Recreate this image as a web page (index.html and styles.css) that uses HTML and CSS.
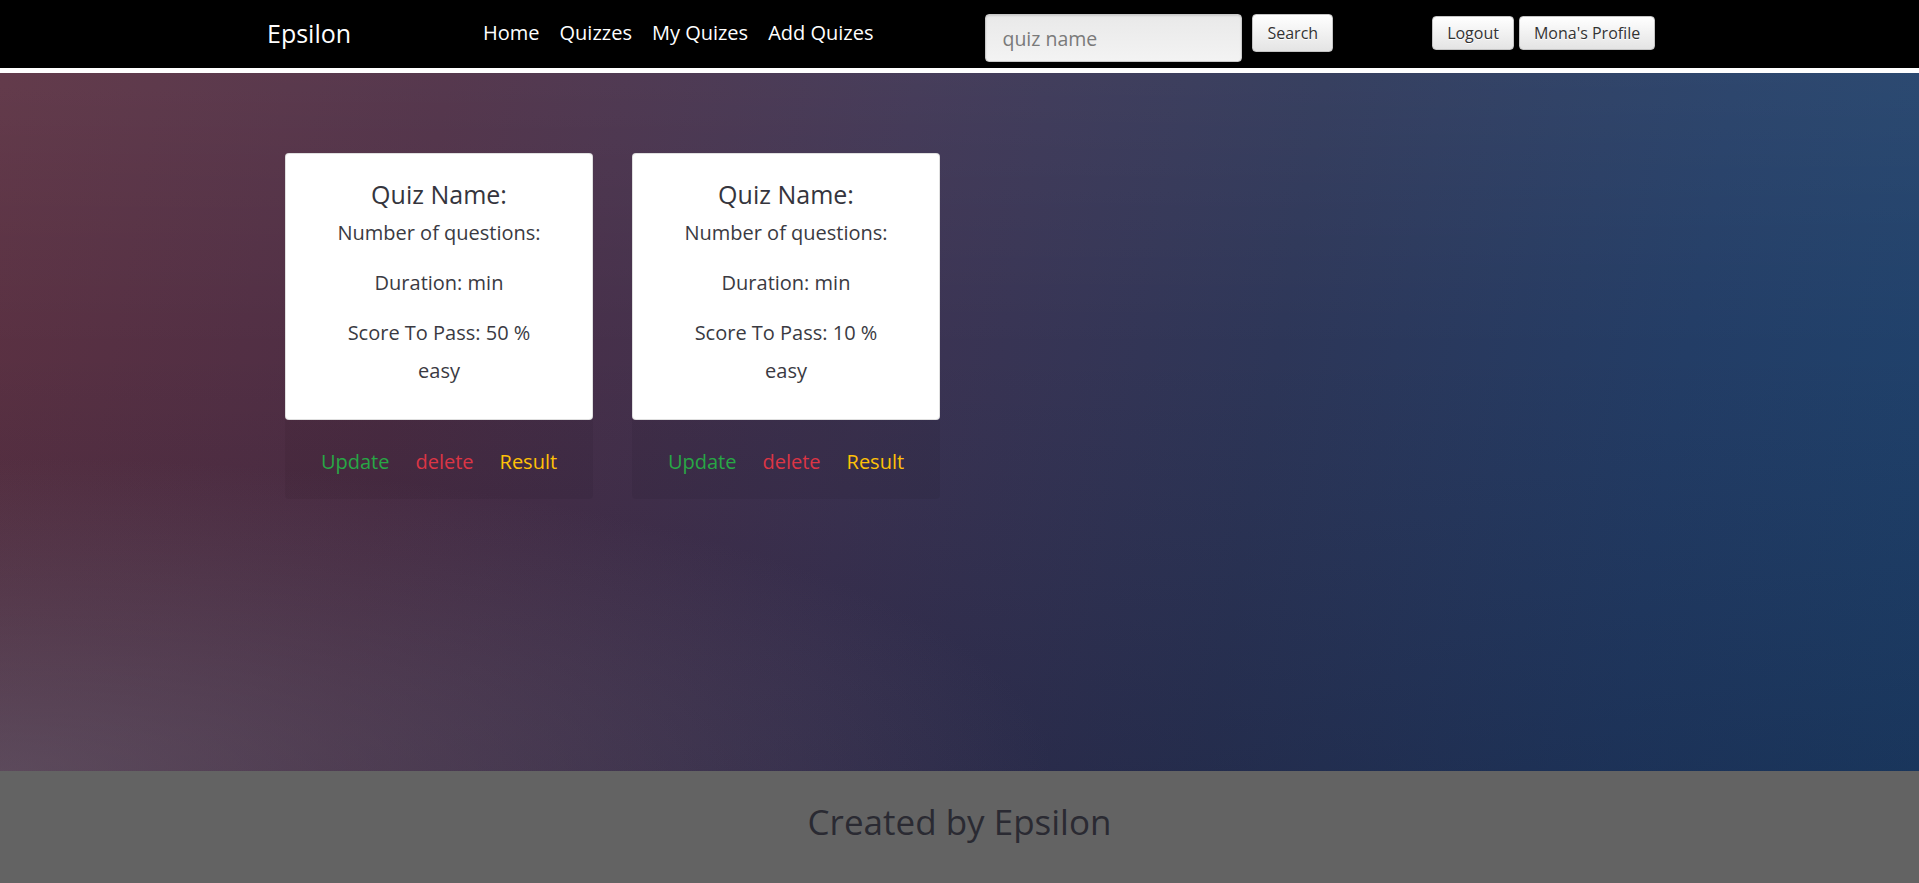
FILE: index.html
```html
<!DOCTYPE html>
<html lang="en">
<head>
<meta charset="utf-8">
<title>Epsilon Quizzes</title>
<link rel="stylesheet" href="styles.css">
</head>
<body>
<header class="navbar">
  <div class="nav-inner">
    <a class="brand" href="#">Epsilon</a>
    <ul class="nav-links">
      <li><a href="#">Home</a></li>
      <li><a href="#">Quizzes</a></li>
      <li><a href="#">My Quizes</a></li>
      <li><a href="#">Add Quizes</a></li>
    </ul>
    <form class="search">
      <input class="search-input" type="text" placeholder="quiz name">
      <button class="btn" type="button">Search</button>
    </form>
    <div class="account">
      <button class="btn btn-sm" type="button">Logout</button>
      <button class="btn btn-sm" type="button">Mona's Profile</button>
    </div>
  </div>
</header>

<main class="hero">
  <div class="cards">
    <div class="card">
      <div class="card-body">
        <h5 class="card-title">Quiz Name:</h5>
        <p class="line">Number of questions:</p>
        <p class="line">Duration: min</p>
        <p class="line tight">Score To Pass: 50 %</p>
        <div class="level">easy</div>
      </div>
      <div class="card-footer">
        <a class="act update" href="#">Update</a>
        <a class="act delete" href="#">delete</a>
        <a class="act result" href="#">Result</a>
      </div>
    </div>
    <div class="card">
      <div class="card-body">
        <h5 class="card-title">Quiz Name:</h5>
        <p class="line">Number of questions:</p>
        <p class="line">Duration: min</p>
        <p class="line tight">Score To Pass: 10 %</p>
        <div class="level">easy</div>
      </div>
      <div class="card-footer">
        <a class="act update" href="#">Update</a>
        <a class="act delete" href="#">delete</a>
        <a class="act result" href="#">Result</a>
      </div>
    </div>
  </div>
</main>

<footer class="site-footer">
  <h2 class="footer-text">Created by Epsilon</h2>
</footer>
</body>
</html>
```

FILE: styles.css
```css
* { box-sizing: border-box; }

html, body {
  margin: 0;
  padding: 0;
}

body {
  font-family: "Open Sans", "Noto Sans", "DejaVu Sans", sans-serif;
  color: #333;
  background: #636363;
}

a { text-decoration: none; }

/* ---------- navbar ---------- */
.navbar {
  background: #000;
  height: 73px;
  border-bottom: 5px solid #fff;
}

.nav-inner {
  display: flex;
  align-items: center;
  height: 68px;
  padding-left: 267px;
  padding-bottom: 3px;
}

.brand {
  color: #fff;
  font-size: 25px;
  line-height: 30px;
  width: 206px;
}

.nav-links {
  list-style: none;
  display: flex;
  margin: 0;
  padding: 0;
}

.nav-links a {
  display: block;
  color: #fff;
  font-size: 20px;
  line-height: 29px;
  padding: 0 10px;
}

.search {
  display: flex;
  align-items: flex-start;
  gap: 10px;
  align-self: flex-start;
  margin-top: 14px;
  margin-left: 102px;
}

.search-input {
  width: 257px;
  height: 48px;
  border: 1px solid #c8c8c8;
  border-radius: 4px;
  background: linear-gradient(to bottom, #e9e9e9 0%, #f3f3f3 100%);
  box-shadow: inset 0 1px 2px rgba(0, 0, 0, 0.12);
  padding: 0 16px;
  font-family: inherit;
  font-size: 19.5px;
  color: #333;
}

.search-input::placeholder { color: #7a7a7a; }

.btn {
  font-family: inherit;
  font-size: 16px;
  color: #333;
  height: 38px;
  padding: 0 14px;
  border: 1px solid #c4c4c4;
  border-radius: 4px;
  background: linear-gradient(to bottom, #ffffff 0%, #e4e4e4 100%);
  text-shadow: 0 1px 0 #fff;
  cursor: pointer;
}

.account {
  display: flex;
  gap: 5px;
  margin-left: 99px;
}

.btn-sm {
  height: 34px;
  padding: 0 14px;
}

/* ---------- hero ---------- */
.hero {
  height: 698px;
  padding: 80px 0 0 285px;
  background:
    radial-gradient(ellipse 55% 45% at 0% 100%, rgba(120, 115, 130, 0.45), rgba(120, 115, 130, 0) 100%),
    linear-gradient(to bottom, rgba(255, 255, 255, 0.05) 0%, rgba(0, 0, 0, 0) 40%, rgba(5, 10, 35, 0.22) 100%),
    linear-gradient(100deg, #5b3142 0%, #4d2e45 22%, #3d3352 45%, #2d3658 65%, #233d66 85%, #1f426c 100%);
}

.cards {
  display: flex;
  gap: 39px;
  align-items: flex-start;
}

.card {
  width: 308px;
  display: flex;
  flex-direction: column;
}

.card-body {
  background: #fff;
  border-radius: 4px;
  border: 1px solid rgba(0, 0, 0, 0.125);
  padding: 26px 12px 34px;
  text-align: center;
}

.card-title {
  margin: 0 0 9px;
  font-size: 25px;
  line-height: 29px;
  font-weight: 400;
  color: #35353d;
}

.line {
  margin: 0 0 21px;
  font-size: 20px;
  line-height: 29px;
  color: #3a3a42;
}

.line.tight { margin-bottom: 9px; }

.level {
  font-size: 20px;
  line-height: 29px;
  color: #3a3a42;
}

.card-footer {
  background: rgba(0, 0, 0, 0.05);
  padding: 27px 0 23px;
  display: flex;
  justify-content: center;
  gap: 26px;
  border-radius: 0 0 4px 4px;
}

.act {
  font-size: 20px;
  line-height: 29px;
}

.update { color: #28a745; }
.delete { color: #dc3545; }
.result { color: #ffc107; }

/* ---------- footer ---------- */
.site-footer {
  height: 112px;
  background: #636363;
  padding-top: 30px;
  text-align: center;
}

.footer-text {
  margin: 0;
  font-size: 35px;
  line-height: 42px;
  font-weight: 400;
  color: #2a2a32;
}
```
